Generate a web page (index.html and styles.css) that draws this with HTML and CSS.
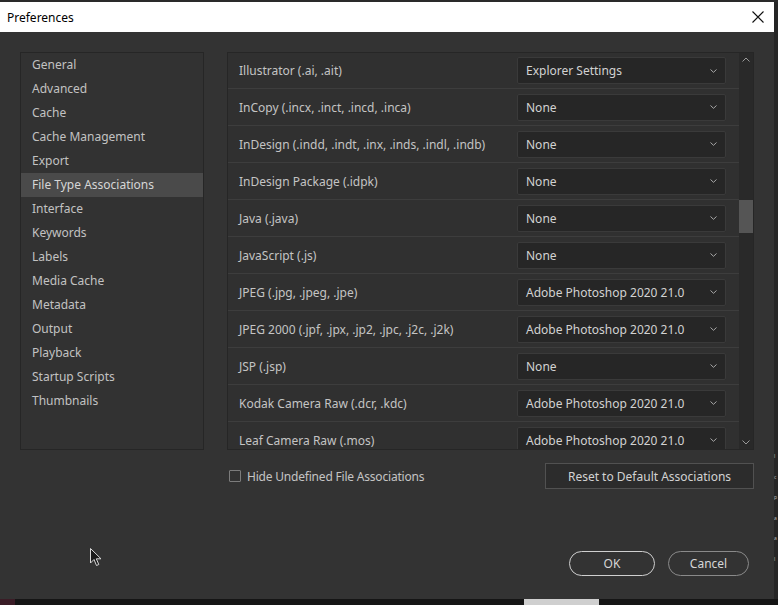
FILE: index.html
```html
<!DOCTYPE html>
<html>
<head>
<meta charset="utf-8">
<link rel="stylesheet" href="styles.css">
</head>
<body>
<div class="top-strip"></div>
<div class="main-row">
  <div class="dialog">
    <div class="titlebar">
      <span class="title">Preferences</span>
      <svg class="close" width="12" height="12" viewBox="0 0 12 12"><path d="M0.5 0.5 L11.5 11.5 M11.5 0.5 L0.5 11.5" stroke="#111" stroke-width="1.1" fill="none"/></svg>
    </div>
    <div class="body">
      <div class="sidebar">
        <div class="nav-item">General</div>
        <div class="nav-item">Advanced</div>
        <div class="nav-item">Cache</div>
        <div class="nav-item">Cache Management</div>
        <div class="nav-item">Export</div>
        <div class="nav-item selected">File Type Associations</div>
        <div class="nav-item">Interface</div>
        <div class="nav-item">Keywords</div>
        <div class="nav-item">Labels</div>
        <div class="nav-item">Media Cache</div>
        <div class="nav-item">Metadata</div>
        <div class="nav-item">Output</div>
        <div class="nav-item">Playback</div>
        <div class="nav-item">Startup Scripts</div>
        <div class="nav-item">Thumbnails</div>
      </div>
      <div class="content">
        <div class="list">
          <div class="rows">
            <div class="row"><span class="label">Illustrator (.ai, .ait)</span><div class="select"><span>Explorer Settings</span><svg class="chev" width="7" height="4" viewBox="0 0 7 4"><path d="M0.5 0.5 L3.5 3.3 L6.5 0.5" stroke="#a8a8a8" fill="none"/></svg></div></div>
            <div class="row"><span class="label">InCopy (.incx, .inct, .incd, .inca)</span><div class="select"><span>None</span><svg class="chev" width="7" height="4" viewBox="0 0 7 4"><path d="M0.5 0.5 L3.5 3.3 L6.5 0.5" stroke="#a8a8a8" fill="none"/></svg></div></div>
            <div class="row"><span class="label">InDesign (.indd, .indt, .inx, .inds, .indl, .indb)</span><div class="select"><span>None</span><svg class="chev" width="7" height="4" viewBox="0 0 7 4"><path d="M0.5 0.5 L3.5 3.3 L6.5 0.5" stroke="#a8a8a8" fill="none"/></svg></div></div>
            <div class="row"><span class="label">InDesign Package (.idpk)</span><div class="select"><span>None</span><svg class="chev" width="7" height="4" viewBox="0 0 7 4"><path d="M0.5 0.5 L3.5 3.3 L6.5 0.5" stroke="#a8a8a8" fill="none"/></svg></div></div>
            <div class="row"><span class="label">Java (.java)</span><div class="select"><span>None</span><svg class="chev" width="7" height="4" viewBox="0 0 7 4"><path d="M0.5 0.5 L3.5 3.3 L6.5 0.5" stroke="#a8a8a8" fill="none"/></svg></div></div>
            <div class="row"><span class="label">JavaScript (.js)</span><div class="select"><span>None</span><svg class="chev" width="7" height="4" viewBox="0 0 7 4"><path d="M0.5 0.5 L3.5 3.3 L6.5 0.5" stroke="#a8a8a8" fill="none"/></svg></div></div>
            <div class="row"><span class="label">JPEG (.jpg, .jpeg, .jpe)</span><div class="select"><span>Adobe Photoshop 2020 21.0</span><svg class="chev" width="7" height="4" viewBox="0 0 7 4"><path d="M0.5 0.5 L3.5 3.3 L6.5 0.5" stroke="#a8a8a8" fill="none"/></svg></div></div>
            <div class="row"><span class="label">JPEG 2000 (.jpf, .jpx, .jp2, .jpc, .j2c, .j2k)</span><div class="select"><span>Adobe Photoshop 2020 21.0</span><svg class="chev" width="7" height="4" viewBox="0 0 7 4"><path d="M0.5 0.5 L3.5 3.3 L6.5 0.5" stroke="#a8a8a8" fill="none"/></svg></div></div>
            <div class="row"><span class="label">JSP (.jsp)</span><div class="select"><span>None</span><svg class="chev" width="7" height="4" viewBox="0 0 7 4"><path d="M0.5 0.5 L3.5 3.3 L6.5 0.5" stroke="#a8a8a8" fill="none"/></svg></div></div>
            <div class="row"><span class="label">Kodak Camera Raw (.dcr, .kdc)</span><div class="select"><span>Adobe Photoshop 2020 21.0</span><svg class="chev" width="7" height="4" viewBox="0 0 7 4"><path d="M0.5 0.5 L3.5 3.3 L6.5 0.5" stroke="#a8a8a8" fill="none"/></svg></div></div>
            <div class="row"><span class="label">Leaf Camera Raw (.mos)</span><div class="select"><span>Adobe Photoshop 2020 21.0</span><svg class="chev" width="7" height="4" viewBox="0 0 7 4"><path d="M0.5 0.5 L3.5 3.3 L6.5 0.5" stroke="#a8a8a8" fill="none"/></svg></div></div>
          </div>
          <div class="scrollbar">
            <svg class="sb-arrow" width="8" height="5" viewBox="0 0 8 5"><path d="M0.5 4.5 L4 1 L7.5 4.5" stroke="#9a9a9a" fill="none"/></svg>
            <div class="sb-track"><div class="sb-thumb"></div></div>
            <svg class="sb-arrow" width="8" height="5" viewBox="0 0 8 5"><path d="M0.5 0.5 L4 4 L7.5 0.5" stroke="#9a9a9a" fill="none"/></svg>
          </div>
        </div>
        <div class="options">
          <label class="check"><span class="box"></span><span>Hide Undefined File Associations</span></label>
          <div class="reset">Reset to Default Associations</div>
        </div>
        <div class="footer">
          <div class="btn ok">OK</div>
          <div class="btn cancel">Cancel</div>
        </div>
      </div>
    </div>
    <svg class="cursor" width="12" height="19" viewBox="0 0 12 19"><path d="M0.5 0.5 L0.5 15 L4 11.5 L6.5 17.5 L8.8 16.5 L6.3 10.8 L11 10.8 Z" fill="#1a1a1a" stroke="#d8d8d8" stroke-width="1"/></svg>
  </div>
  <div class="right-strip">
    <span>l</span><span>c</span><span>p</span><span>a</span><span>a</span><span>l</span>
  </div>
</div>
<div class="bottom-strip"><span class="red"></span><span class="gap"></span><span class="light"></span></div>
</body>
</html>
```

FILE: styles.css
```css
html, body {
  margin: 0;
  padding: 0;
}
body {
  width: 778px;
  height: 605px;
  overflow: hidden;
  background: #1c1c1c;
  font-family: "Noto Sans", "Open Sans", sans-serif;
  font-size: 12px;
}
.top-strip {
  height: 2px;
  background: #2a2a2a;
}
.main-row {
  display: flex;
  height: 597px;
}
.dialog {
  position: relative;
  width: 774px;
  height: 597px;
  display: flex;
  flex-direction: column;
  background: #333333;
}
.titlebar {
  height: 30px;
  background: #ffffff;
  display: flex;
  align-items: center;
  justify-content: space-between;
  padding: 0 10px 0 7px;
  flex-shrink: 0;
}
.title {
  color: #000;
  font-size: 12px;
}
.close {
  display: block;
}
.body {
  flex: 1;
  display: flex;
  padding: 20px 0 0 20px;
}
.sidebar {
  width: 182px;
  height: 396px;
  border: 1px solid #262626;
  background: #323232;
  display: flex;
  flex-direction: column;
}
.nav-item {
  height: 24px;
  line-height: 23px;
  padding-left: 11px;
  color: #c2c2c2;
  white-space: nowrap;
}
.nav-item.selected {
  background: #4a4a4a;
  color: #d6d6d6;
}
.content {
  margin-left: 23px;
  width: 527px;
  display: flex;
  flex-direction: column;
}
.list {
  height: 396px;
  border: 1px solid #262626;
  background: #303030;
  display: flex;
  overflow: hidden;
}
.rows {
  flex: 1;
  display: flex;
  flex-direction: column;
}
.row {
  flex-shrink: 0;
  box-sizing: border-box;
  height: 37px;
  border-bottom: 1px solid #3d3d3d;
  display: flex;
  align-items: center;
  padding-left: 11px;
}
.row:first-child {
  height: 36px;
}
.label {
  flex: 1;
  color: #c4c4c4;
  white-space: nowrap;
}
.select {
  box-sizing: border-box;
  width: 209px;
  height: 27px;
  margin-right: 13px;
  border: 1px solid #3a3a3a;
  border-radius: 2px;
  background: #262626;
  color: #d2d2d2;
  display: flex;
  align-items: center;
  justify-content: space-between;
  padding: 0 8px 0 8px;
}
.chev {
  display: block;
}
.scrollbar {
  width: 14px;
  background: #292929;
  display: flex;
  flex-direction: column;
  align-items: center;
}
.sb-arrow {
  display: block;
  margin: 4px 0;
}
.sb-track {
  flex: 1;
  width: 100%;
  position: relative;
}
.sb-thumb {
  position: absolute;
  left: 0;
  right: 0;
  top: 134px;
  height: 33px;
  background: #555555;
}
.options {
  margin-top: 13px;
  display: flex;
  align-items: center;
  justify-content: space-between;
  height: 26px;
}
.check {
  display: flex;
  align-items: center;
  gap: 6px;
  margin-left: 2px;
  color: #c4c4c4;
  letter-spacing: -0.2px;
}
.box {
  box-sizing: border-box;
  width: 12px;
  height: 12px;
  border: 1px solid #7c7c7c;
  border-radius: 1px;
}
.reset {
  box-sizing: border-box;
  width: 209px;
  height: 26px;
  border: 1px solid #515151;
  background: #2c2c2c;
  color: #d2d2d2;
  display: flex;
  align-items: center;
  justify-content: center;
}
.footer {
  margin-top: 62px;
  display: flex;
  justify-content: flex-end;
  gap: 13px;
  padding-right: 5px;
}
.btn {
  box-sizing: border-box;
  height: 25px;
  border-radius: 13px;
  color: #d6d6d6;
  display: flex;
  align-items: center;
  justify-content: center;
}
.ok {
  width: 86px;
  border: 1px solid #cfcfcf;
}
.cancel {
  width: 81px;
  border: 1px solid #8a8a8a;
}
.cursor {
  position: absolute;
  left: 90px;
  top: 546px;
}
.right-strip {
  width: 4px;
  background: #262626;
  overflow: hidden;
  display: flex;
  flex-direction: column;
  padding-top: 444px;
  box-sizing: border-box;
  color: #b8b8b8;
  font-size: 5px;
  line-height: 20.5px;
}
.right-strip span {
  display: block;
}
.bottom-strip {
  height: 6px;
  display: flex;
  background: #151515;
}
.red {
  width: 15px;
  background: #3a1c26;
}
.gap {
  width: 509px;
}
.light {
  width: 75px;
  background: #cfcfcf;
}
```
